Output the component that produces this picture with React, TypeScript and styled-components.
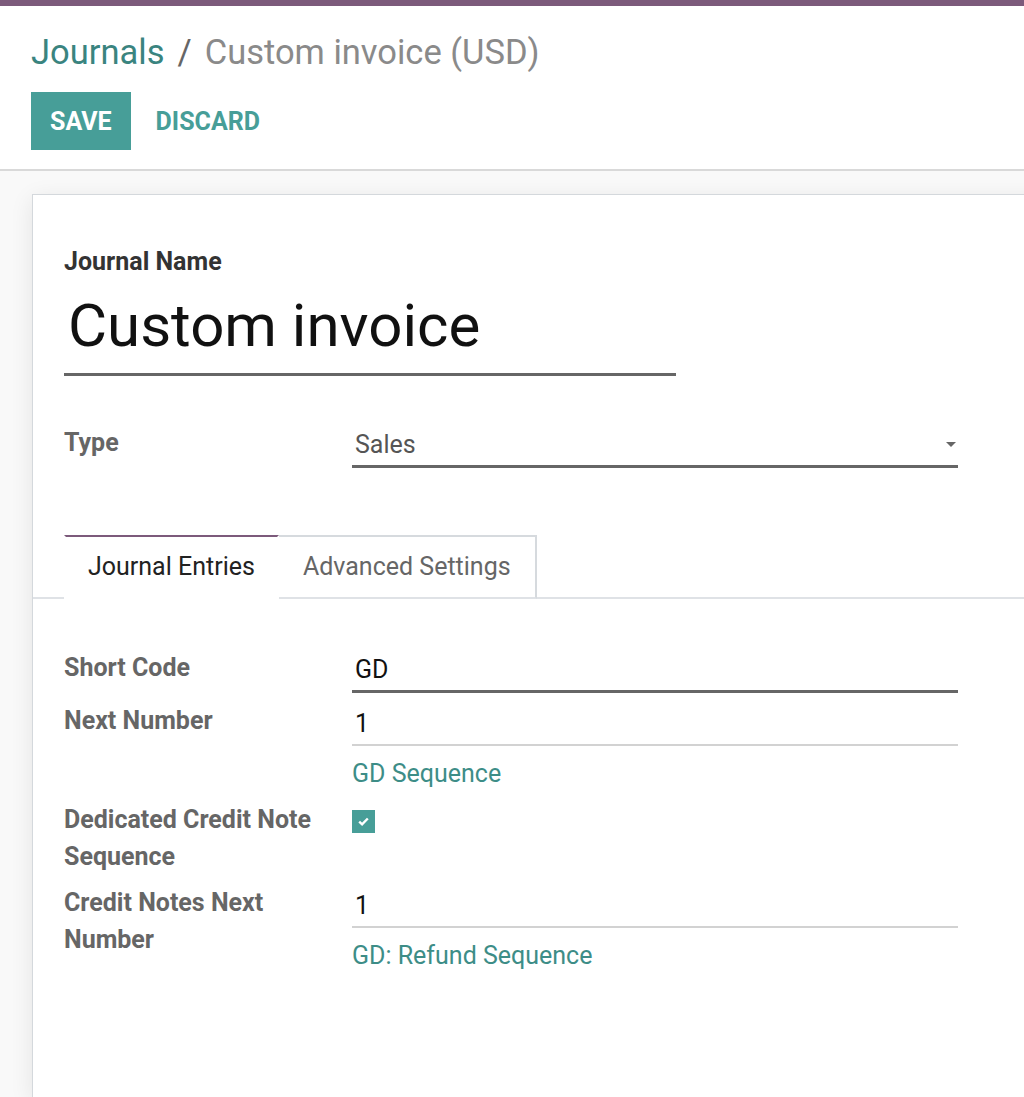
import React from 'react';
import styled, { createGlobalStyle } from 'styled-components';

const TEAL = '#479e98';
const LINK = '#3d8d87';
const PURPLE = '#7c5a7b';
const FONT = 'Roboto, "Noto Sans", "Liberation Sans", sans-serif';

const GlobalStyle = createGlobalStyle`
  html, body {
    margin: 0;
    padding: 0;
    background: #f9f9f9;
    font-family: ${FONT};
    overflow: hidden;
  }
`;

const Page = styled.div`
  display: flex;
  flex-direction: column;
  min-height: 1097px;
`;

const TopBar = styled.div`
  height: 6px;
  background: ${PURPLE};
`;

const ControlPanel = styled.div`
  background: #fff;
  border-bottom: 2px solid #d9d9d9;
  padding: 26px 31px 19px;
  display: flex;
  flex-direction: column;
  gap: 20px;
`;

const Breadcrumb = styled.div`
  display: flex;
  align-items: center;
  font-size: 34.5px;
  line-height: 40px;
  color: #8a8a8a;
`;

const Crumb = styled.span<{ $link?: boolean }>`
  color: ${(p) => (p.$link ? '#3a847f' : '#8a8a8a')};
`;

const Slash = styled.span`
  color: #666;
  padding: 0 13px;
`;

const Buttons = styled.div`
  display: flex;
  align-items: center;
  gap: 25px;
`;

const Button = styled.button<{ $primary?: boolean }>`
  font-family: ${FONT};
  font-weight: 700;
  font-size: 25px;
  text-transform: uppercase;
  height: 58px;
  padding: 0 ${(p) => (p.$primary ? 19 : 0)}px;
  border: none;
  cursor: pointer;
  background: ${(p) => (p.$primary ? TEAL : 'transparent')};
  color: ${(p) => (p.$primary ? '#fff' : TEAL)};
`;

const Content = styled.div`
  flex: 1;
  display: flex;
  padding: 23px 0 0 32px;
`;

const Sheet = styled.div`
  flex: 0 0 1100px;
  background: #fff;
  border: 1px solid #d4d8dc;
  border-bottom: none;
  box-shadow: 0 5px 22px rgba(0, 0, 0, 0.09);
  padding: 51px 0 0 31px;
`;

const TitleLabel = styled.div`
  font-size: 25px;
  font-weight: 700;
  color: #333;
  line-height: 32px;
`;

const TitleInput = styled.div`
  width: 612px;
  border-bottom: 3px solid #666;
  font-size: 60px;
  line-height: 95px;
  color: #111;
  padding: 0 0 0 4px;
  box-sizing: border-box;
`;

const Group = styled.div`
  display: grid;
  grid-template-columns: 288px 606px;
  row-gap: 9px;
`;

const Label = styled.div`
  font-size: 25px;
  font-weight: 700;
  color: #666;
  line-height: 37px;
`;

const Value = styled.div`
  display: flex;
  flex-direction: column;
  align-items: flex-start;
`;

const Field = styled.div<{ $strong?: boolean; $muted?: boolean }>`
  align-self: stretch;
  display: flex;
  align-items: center;
  justify-content: space-between;
  height: ${(p) => (p.$strong ? 41 : 42)}px;
  border-bottom: ${(p) => (p.$strong ? '3px solid #666' : '2px solid #d2d2d2')};
  font-size: 25px;
  color: ${(p) => (p.$muted ? '#555' : '#111')};
  padding: 0 0 0 3px;
  box-sizing: content-box;
`;

const Caret = styled.span`
  width: 0;
  height: 0;
  border-left: 5px solid transparent;
  border-right: 5px solid transparent;
  border-top: 5px solid #666;
  margin-right: 2px;
`;

const Link = styled.a`
  font-size: 25px;
  color: ${LINK};
  line-height: 37px;
  margin-top: 9px;
  text-decoration: none;
`;

const Check = styled.span`
  width: 23px;
  height: 23px;
  margin-top: 9px;
  background: ${TEAL};
  display: flex;
  align-items: center;
  justify-content: center;
`;

const TypeGroup = styled(Group)`
  margin-top: 48px;
`;

const Tabs = styled.div`
  display: flex;
  margin: 67px 0 0 -31px;
  padding-left: 31px;
  border-bottom: 2px solid #dfe2e6;
`;

const Tab = styled.div<{ $active?: boolean }>`
  font-size: 25px;
  line-height: 60px;
  padding: 0 ${(p) => (p.$active ? 22 : 24)}px;
  margin-bottom: -2px;
  color: ${(p) => (p.$active ? '#222' : '#666')};
  background: #fff;
  border: 2px solid ${(p) => (p.$active ? 'transparent' : '#d6dade')};
  border-top-color: ${(p) => (p.$active ? PURPLE : '#d6dade')};
  border-bottom-color: ${(p) => (p.$active ? '#fff' : '#dfe2e6')};
  border-left: ${(p) => (p.$active ? '2px solid transparent' : 'none')};
`;

const TabBody = styled(Group)`
  margin-top: 50px;
`;

const CheckIcon = () => (
  <svg width="11" height="9" viewBox="0 0 11 9">
    <path d="M1.2 4.6 L4.1 7.3 L9.8 1.5" stroke="#fff" strokeWidth="2.4" fill="none" />
  </svg>
);

export default function App() {
  return (
    <Page>
      <GlobalStyle />
      <TopBar />
      <ControlPanel>
        <Breadcrumb>
          <Crumb $link>Journals</Crumb>
          <Slash>/</Slash>
          <Crumb>Custom invoice (USD)</Crumb>
        </Breadcrumb>
        <Buttons>
          <Button $primary>Save</Button>
          <Button>Discard</Button>
        </Buttons>
      </ControlPanel>
      <Content>
        <Sheet>
          <TitleLabel>Journal Name</TitleLabel>
          <TitleInput>Custom invoice</TitleInput>

          <TypeGroup>
            <Label>Type</Label>
            <Value>
              <Field $strong $muted>
                Sales
                <Caret />
              </Field>
            </Value>
          </TypeGroup>

          <Tabs>
            <Tab $active>Journal Entries</Tab>
            <Tab>Advanced Settings</Tab>
          </Tabs>

          <TabBody>
            <Label>Short Code</Label>
            <Value>
              <Field $strong>GD</Field>
            </Value>

            <Label>Next Number</Label>
            <Value>
              <Field>1</Field>
              <Link href="#">GD Sequence</Link>
            </Value>

            <Label>
              Dedicated Credit Note
              <br />
              Sequence
            </Label>
            <Value>
              <Check>
                <CheckIcon />
              </Check>
            </Value>

            <Label>
              Credit Notes Next
              <br />
              Number
            </Label>
            <Value>
              <Field>1</Field>
              <Link href="#">GD: Refund Sequence</Link>
            </Value>
          </TabBody>
        </Sheet>
      </Content>
    </Page>
  );
}
